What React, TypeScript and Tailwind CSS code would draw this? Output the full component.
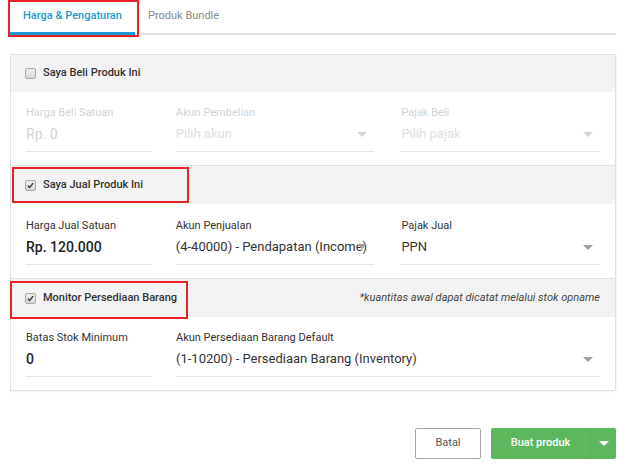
import type { ReactNode } from 'react'

const font = { fontFamily: 'Roboto, "Liberation Sans", sans-serif' }

function CheckBox({ checked }: { checked?: boolean }) {
  return (
    <span className="inline-flex size-[11px] shrink-0 items-center justify-center rounded-[2px] border border-[#a9a9a9] bg-gradient-to-b from-[#f0f0f0] to-[#d8d8d8]">
      {checked ? (
        <svg viewBox="0 0 12 12" className="size-[9px]">
          <path d="M2.5 6.2 L4.8 8.6 L9.6 2.8" fill="none" stroke="#3d3d3d" strokeWidth="1.9" />
        </svg>
      ) : null}
    </span>
  )
}

function Caret({ color = '#a0a0a0' }: { color?: string }) {
  return (
    <svg viewBox="0 0 10 5" className="h-[5px] w-[10px] shrink-0">
      <path d="M0 0 L10 0 L5 5 Z" fill={color} />
    </svg>
  )
}

function SectionHeader({
  label,
  checked,
  note,
  height = 'h-[38px]',
}: {
  label: string
  checked?: boolean
  note?: string
  height?: string
}) {
  return (
    <div className={`flex ${height} items-center justify-between bg-[#f3f3f3] pr-[15px] pl-[14px]`}>
      <div className="flex items-center gap-[7px]">
        <CheckBox checked={checked} />
        <span className="text-[11px] font-medium text-[#333]">{label}</span>
      </div>
      {note ? <span className="text-[11px] text-[#444] italic">{note}</span> : null}
    </div>
  )
}

function Field({
  label,
  children,
  disabled,
  caret,
  className,
}: {
  label: string
  children: ReactNode
  disabled?: boolean
  caret?: boolean
  className?: string
}) {
  return (
    <div className={className}>
      <p className={`text-[11px] leading-[14px] ${disabled ? 'text-[#cfd3d6]' : 'text-[#333]'}`}>
        {label}
      </p>
      <div className="mt-[4px] flex items-center justify-between border-b border-[#e6e6e6] pb-[7px] leading-[20px]">
        {children}
        {caret ? (
          <span className="pr-[7px]">
            <Caret color={disabled ? '#d5d5d5' : '#a0a0a0'} />
          </span>
        ) : null}
      </div>
    </div>
  )
}

export default function App() {
  return (
    <div className="relative h-[469px] w-[626px] bg-white" style={font}>
      <div className="px-[10px]">
        <div className="flex h-[35px] border-b-2 border-[#e2e2e2]">
          <div className="-mb-[2px] flex w-[125px] items-center justify-center border-b-[3px] border-[#1a9ad6] text-[11px] font-medium text-[#1a9ad6]">
            Harga &amp; Pengaturan
          </div>
          <div className="flex items-center px-[13px] text-[11px] text-[#888]">Produk Bundle</div>
        </div>

        <div className="mt-[19px] border border-[#e2e2e2] shadow-[1px_1px_2px_rgba(0,0,0,0.06)]">
          <SectionHeader label="Saya Beli Produk Ini" height="h-[37px]" />
          <div className="flex h-[73px] gap-[25px] px-[15px] pt-[14px]">
            <Field label="Harga Beli Satuan" disabled className="w-[125px]">
              <span className="text-[14px] text-[#cfd3d6]">Rp. 0</span>
            </Field>
            <Field label="Akun Pembelian" disabled caret className="w-[199px]">
              <span className="text-[13px] text-[#dcdfe1]">Pilih akun</span>
            </Field>
            <Field label="Pajak Beli" disabled caret className="ml-[2px] w-[199px]">
              <span className="text-[13px] text-[#dcdfe1]">Pilih pajak</span>
            </Field>
          </div>

          <div className="border-t border-[#e2e2e2]">
            <SectionHeader label="Saya Jual Produk Ini" checked />
          </div>
          <div className="flex h-[74px] gap-[25px] px-[15px] pt-[15px]">
            <Field label="Harga Jual Satuan" className="w-[125px]">
              <span className="text-[14px] font-medium text-[#222]">Rp. 120.000</span>
            </Field>
            <Field label="Akun Penjualan" className="w-[199px]">
              <span className="relative flex-1 text-[13px] whitespace-nowrap text-[#333]">
                (4-40000) - Pendapatan (Income)
                <span className="absolute top-[7px] left-[181px] flex">
                  <Caret />
                </span>
              </span>
            </Field>
            <Field label="Pajak Jual" caret className="ml-[2px] w-[199px]">
              <span className="text-[13px] text-[#333]">PPN</span>
            </Field>
          </div>

          <div className="border-t border-[#e2e2e2]">
            <SectionHeader
              label="Monitor Persediaan Barang"
              checked
              note="*kuantitas awal dapat dicatat melalui stok opname"
            />
          </div>
          <div className="flex h-[73px] gap-[25px] px-[15px] pt-[14px]">
            <Field label="Batas Stok Minimum" className="w-[125px]">
              <span className="text-[14px] font-medium text-[#222]">0</span>
            </Field>
            <Field label="Akun Persediaan Barang Default" caret className="flex-1">
              <span className="text-[13px] text-[#333]">(1-10200) - Persediaan Barang (Inventory)</span>
            </Field>
          </div>
        </div>

        <div className="mt-[37px] flex justify-end gap-[10px]">
          <button
            type="button"
            className="h-[31px] w-[66px] rounded-[2px] border border-[#a5a5a5] bg-white text-[11px] text-[#555]"
          >
            Batal
          </button>
          <div className="flex h-[31px] w-[125px] overflow-hidden rounded-[2px] bg-[#5cb85c] text-white">
            <button type="button" className="flex-1 text-[11px] font-medium">
              Buat produk
            </button>
            <span className="flex w-[26px] items-center justify-center border-l border-[#55ad55]">
              <Caret color="#ffffff" />
            </span>
          </div>
        </div>
      </div>

      <div className="pointer-events-none absolute top-0 left-[8px] h-[37px] w-[131px] border-2 border-[#e8212b]" />
      <div className="pointer-events-none absolute top-[167px] left-[12px] h-[36px] w-[177px] border-2 border-[#e8212b]" />
      <div className="pointer-events-none absolute top-[281px] left-[10px] h-[38px] w-[178px] border-2 border-[#e8212b]" />
    </div>
  )
}
